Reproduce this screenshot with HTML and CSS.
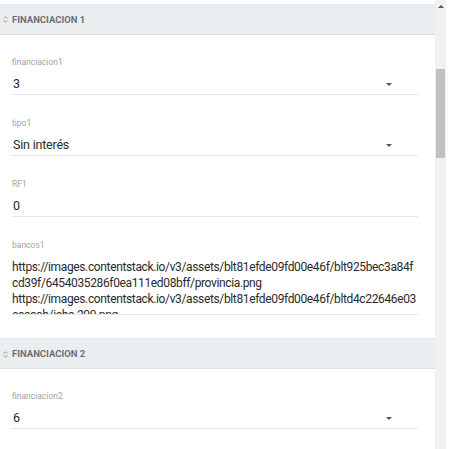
FILE: index.html
```html
<!DOCTYPE html>
<html lang="es">
<head>
<meta charset="utf-8">
<link rel="stylesheet" href="styles.css">
</head>
<body>
<div class="window">
  <div class="panel">
    <section class="group">
      <div class="group-head">
        <svg class="toggle" width="5" height="7" viewBox="0 0 5 7"><path d="M0.5 2.5 L2.5 0.8 L4.5 2.5 M0.5 4.5 L2.5 6.2 L4.5 4.5" fill="none" stroke="#8a8e92" stroke-width="0.9"/></svg>
        <span class="group-title">FINANCIACION 1</span>
      </div>
      <div class="group-body">
        <div class="field">
          <div class="label">financiacion1</div>
          <div class="value select">3<span class="caret"></span></div>
        </div>
        <div class="field">
          <div class="label">tipo1</div>
          <div class="value select">Sin interés<span class="caret"></span></div>
        </div>
        <div class="field">
          <div class="label">RF1</div>
          <div class="value">0</div>
        </div>
        <div class="field last">
          <div class="label">bancos1</div>
          <div class="value area">https://images.contentstack.io/v3/assets/blt81efde09fd00e46f/blt925bec3a84fcd39f/6454035286f0ea111ed08bff/provincia.png
https://images.contentstack.io/v3/assets/blt81efde09fd00e46f/bltd4c22646e03ecacab/icbc-200.png</div>
        </div>
      </div>
    </section>
    <section class="group">
      <div class="group-head">
        <svg class="toggle" width="5" height="7" viewBox="0 0 5 7"><path d="M0.5 2.5 L2.5 0.8 L4.5 2.5 M0.5 4.5 L2.5 6.2 L4.5 4.5" fill="none" stroke="#8a8e92" stroke-width="0.9"/></svg>
        <span class="group-title">FINANCIACION 2</span>
      </div>
      <div class="group-body">
        <div class="field">
          <div class="label">financiacion2</div>
          <div class="value select">6<span class="caret"></span></div>
        </div>
      </div>
    </section>
  </div>
  <div class="scrollbar">
    <div class="sb-btn"><span class="sb-arrow"></span></div>
    <div class="sb-track"><div class="sb-thumb"></div></div>
  </div>
</div>
</body>
</html>
```

FILE: styles.css
```css
html, body {
  margin: 0;
  padding: 0;
  background: #ffffff;
}
body {
  font-family: Roboto, "Liberation Sans", Arial, sans-serif;
  color: #222;
}
.window {
  display: flex;
  width: 446px;
  height: 449px;
  overflow: hidden;
}
.panel {
  width: 435px;
  padding-top: 4px;
  flex: none;
}
.group-head {
  height: 30px;
  background: #ebeef1;
  border-bottom: 1px solid #dadde0;
  display: flex;
  align-items: center;
  padding-left: 3px;
  gap: 4px;
}
.group + .group .group-head {
  border-top: 1px solid #e4e6e8;
  height: 29px;
}
.toggle {
  flex: none;
  margin-top: 1px;
}
.group-title {
  font-size: 9.5px;
  font-weight: 700;
  color: #6c7075;
}
.group-body {
  padding: 21px 17px 23px 12px;
}
.field {
  margin-bottom: 22px;
}
.field.last {
  margin-bottom: 0;
}
.label {
  font-size: 8.5px;
  line-height: 12px;
  color: #a3a3a3;
}
.value {
  position: relative;
  margin-top: 6px;
  font-size: 12.5px;
  letter-spacing: -0.2px;
  line-height: 20px;
  padding-left: 1px;
  border-bottom: 1px solid #e6e6e2;
  color: #2a2a2a;
}
.caret {
  position: absolute;
  right: 26px;
  top: 9px;
  width: 0;
  height: 0;
  border-left: 3px solid transparent;
  border-right: 3px solid transparent;
  border-top: 3px solid #555;
}
.value.area {
  margin-top: 8px;
  padding-left: 0;
  font-size: 12px;
  letter-spacing: -0.36px;
  line-height: 16px;
  height: 55px;
  overflow: hidden;
  white-space: pre-wrap;
  word-break: break-all;
}
.scrollbar {
  width: 11px;
  flex: none;
  background: #f1f1f1;
  display: flex;
  flex-direction: column;
}
.sb-btn {
  height: 14px;
  display: flex;
  justify-content: center;
  padding-top: 5px;
  box-sizing: border-box;
}
.sb-arrow {
  width: 0;
  height: 0;
  border-left: 3px solid transparent;
  border-right: 3px solid transparent;
  border-bottom: 3px solid #505050;
}
.sb-track {
  flex: 1;
  padding-top: 55px;
}
.sb-thumb {
  height: 89px;
  background: #c1c1c1;
  margin: 0 1px;
}
```
